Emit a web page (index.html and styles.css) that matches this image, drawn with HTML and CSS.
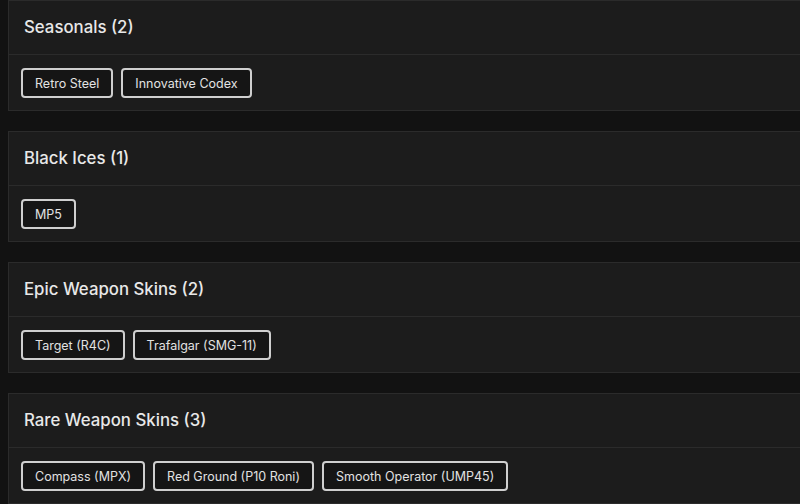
FILE: index.html
```html
<!DOCTYPE html>
<html>
<head>
<meta charset="utf-8">
<link rel="stylesheet" href="styles.css">
</head>
<body>
<div class="list">
  <section class="card">
    <div class="card-head">Seasonals (2)</div>
    <div class="card-body">
      <span class="tag">Retro Steel</span>
      <span class="tag">Innovative Codex</span>
    </div>
  </section>
  <section class="card">
    <div class="card-head">Black Ices (1)</div>
    <div class="card-body">
      <span class="tag">MP5</span>
    </div>
  </section>
  <section class="card">
    <div class="card-head">Epic Weapon Skins (2)</div>
    <div class="card-body">
      <span class="tag">Target (R4C)</span>
      <span class="tag">Trafalgar (SMG-11)</span>
    </div>
  </section>
  <section class="card">
    <div class="card-head">Rare Weapon Skins (3)</div>
    <div class="card-body">
      <span class="tag">Compass (MPX)</span>
      <span class="tag">Red Ground (P10 Roni)</span>
      <span class="tag">Smooth Operator (UMP45)</span>
    </div>
  </section>
</div>
</body>
</html>
```
FILE: styles.css
```css
html, body {
  margin: 0;
  padding: 0;
  background: #121212;
  overflow: hidden;
}
body {
  font-family: "Inter", "Noto Sans", sans-serif;
  color: #e6e6e6;
}
.list {
  display: flex;
  flex-direction: column;
  gap: 20px;
  padding: 0 0 0 8px;
  width: 820px;
}
.card {
  background: #1c1c1c;
  border: 1px solid #2b2b2b;
}
.card-head {
  height: 54px;
  box-sizing: border-box;
  padding: 0 15px 1px;
  display: flex;
  align-items: center;
  font-size: 16.8px;
  font-weight: 500;
  color: #e8e8e8;
  border-bottom: 1px solid #2b2b2b;
}
.card-body {
  height: 55px;
  box-sizing: border-box;
  padding: 13px 12px 0;
  display: flex;
  gap: 8px;
  align-items: flex-start;
}
.tag {
  height: 30px;
  box-sizing: border-box;
  display: inline-flex;
  align-items: center;
  padding: 0 12px;
  border: 2px solid #cfcfcf;
  border-radius: 4px;
  background: #151515;
  font-size: 12.5px;
  color: #e2e2e2;
}
```
